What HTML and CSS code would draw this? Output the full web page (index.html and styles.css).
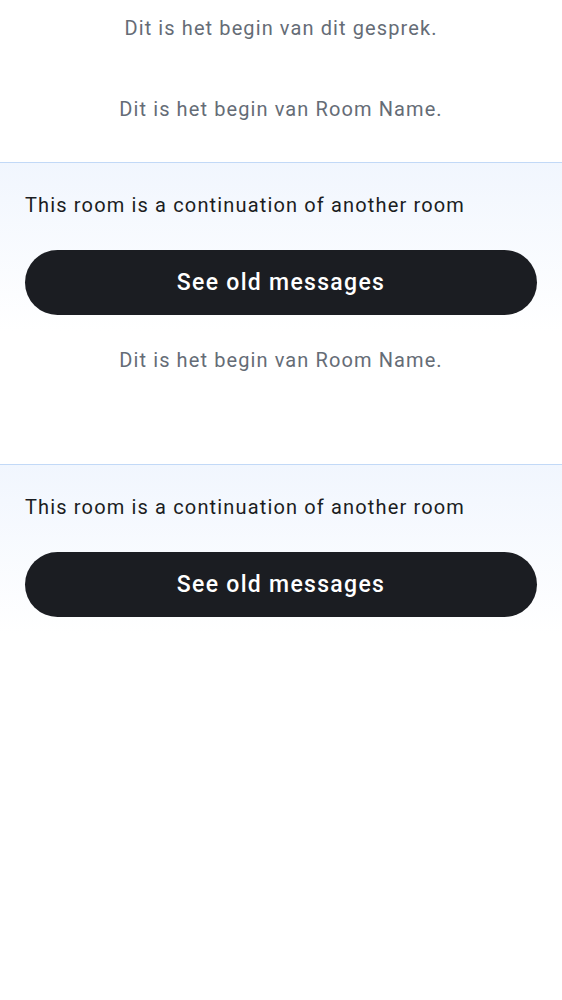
FILE: index.html
```html
<!DOCTYPE html>
<html lang="nl">
<head>
<meta charset="utf-8">
<link rel="stylesheet" href="styles.css">
</head>
<body>
<div class="timeline">
  <p class="notice first">Dit is het begin van dit gesprek.</p>
  <p class="notice second">Dit is het begin van Room Name.</p>
  <section class="predecessor">
    <p class="pred-text">This room is a continuation of another room</p>
    <button class="pred-btn">See old messages</button>
  </section>
  <p class="notice third">Dit is het begin van Room Name.</p>
  <section class="predecessor">
    <p class="pred-text">This room is a continuation of another room</p>
    <button class="pred-btn">See old messages</button>
  </section>
</div>
</body>
</html>
```

FILE: styles.css
```css
html, body {
  margin: 0;
  padding: 0;
  background: #ffffff;
}
body {
  font-family: Roboto, "Liberation Sans", sans-serif;
}
.timeline {
  display: flex;
  flex-direction: column;
}
.notice {
  margin: 0;
  text-align: center;
  font-size: 20px;
  line-height: 28px;
  color: #656c76;
  letter-spacing: 1.1px;
}
.notice.first {
  margin-top: 14px;
}
.notice.second {
  margin-top: 53px;
  margin-bottom: 39px;
}
.notice.third {
  margin-top: 15px;
  margin-bottom: 90px;
}
.predecessor {
  border-top: 1px solid #c2d9f7;
  background: linear-gradient(to bottom, #f1f6fe 0%, #ffffff 100%);
  padding: 28px 25px 16px;
  display: flex;
  flex-direction: column;
}
.pred-text {
  margin: 0;
  font-size: 20px;
  line-height: 28px;
  color: #1b1d22;
  letter-spacing: 1.15px;
}
.pred-btn {
  margin-top: 31px;
  height: 65px;
  border: none;
  border-radius: 33px;
  background: #1b1d22;
  color: #ffffff;
  font-family: Roboto, "Liberation Sans", sans-serif;
  font-size: 23px;
  font-weight: 500;
  letter-spacing: 1.3px;
  cursor: pointer;
}
```
